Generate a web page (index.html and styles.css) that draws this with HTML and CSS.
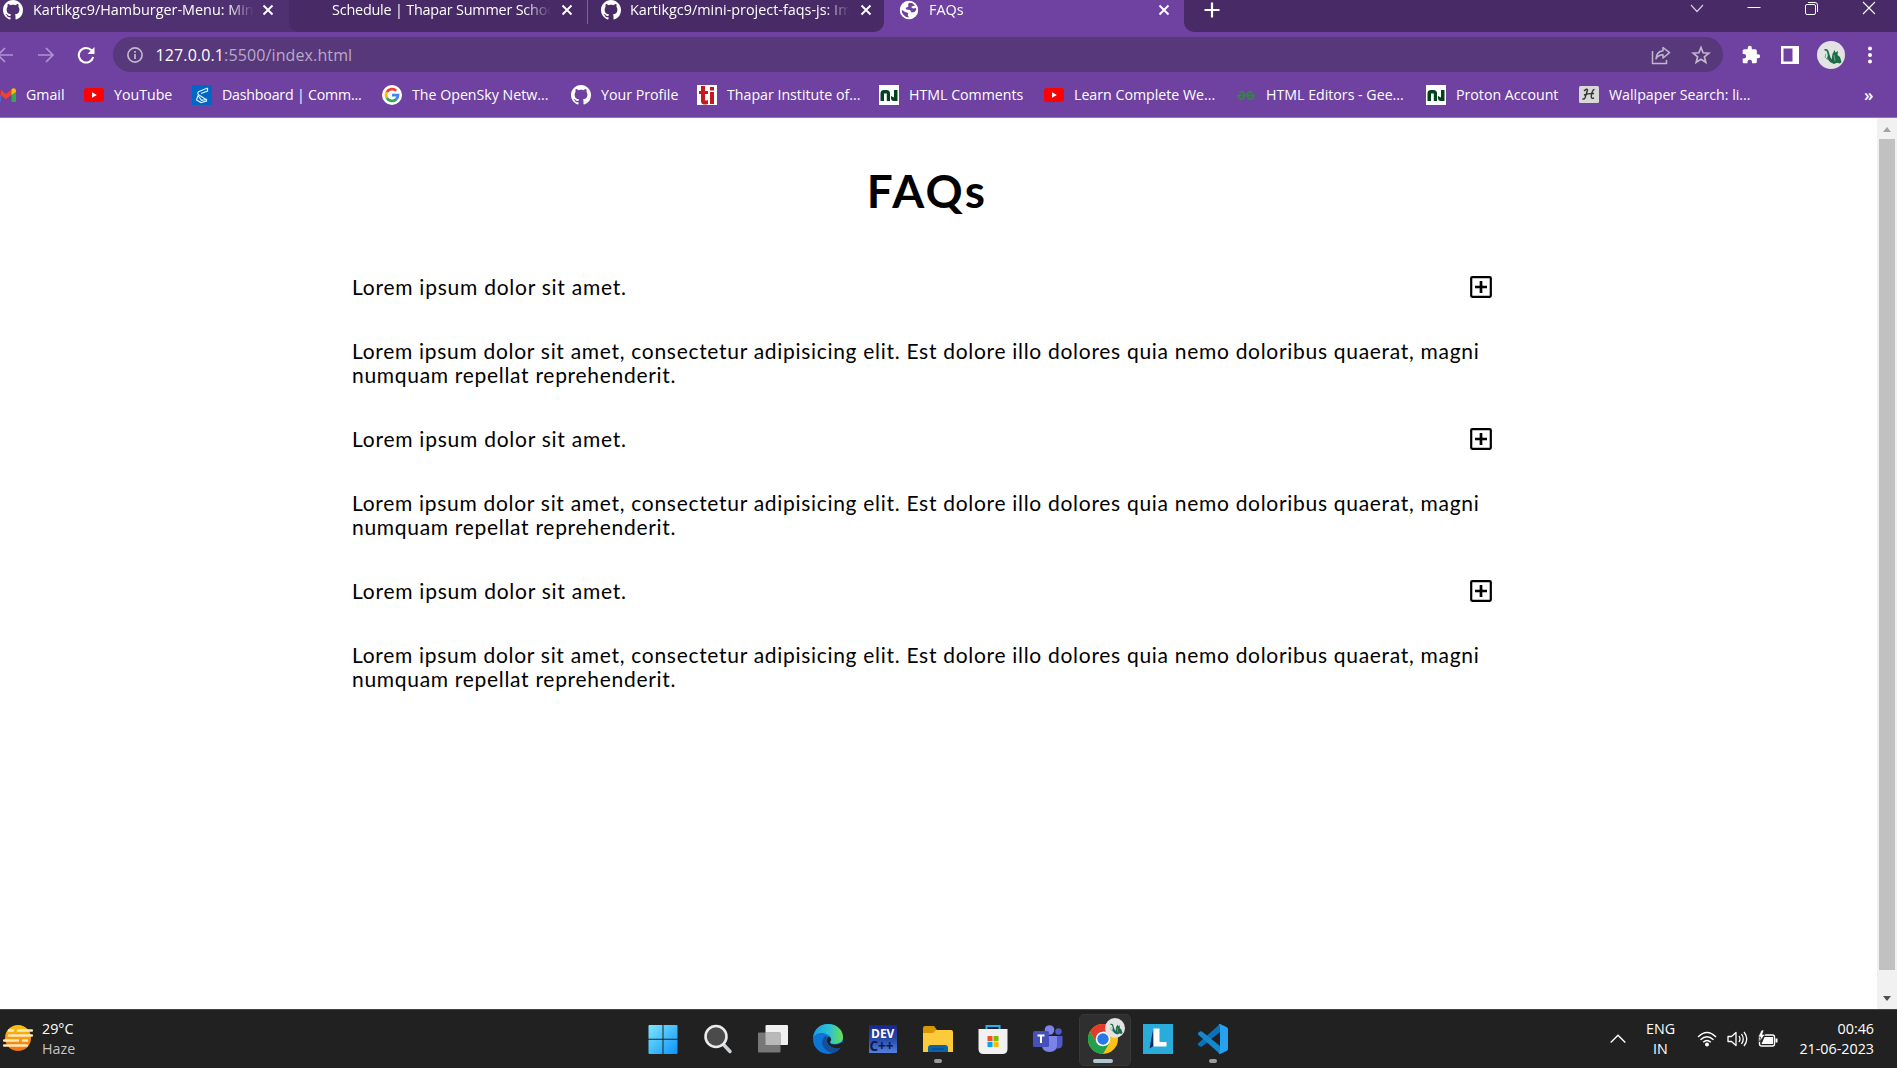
FILE: index.html
```html
<!DOCTYPE html>
<html lang="en">
<head>
<meta charset="utf-8">
<title>FAQs</title>
<link rel="stylesheet" href="styles.css">
</head>
<body>
<svg class="defs" width="0" height="0" aria-hidden="true">
  <defs>
    <symbol id="github" viewBox="0 0 16 16"><path fill="#fff" d="M8 0C3.58 0 0 3.58 0 8c0 3.54 2.29 6.53 5.47 7.59.4.07.55-.17.55-.38 0-.19-.01-.82-.01-1.49-2.01.37-2.53-.49-2.69-.94-.09-.23-.48-.94-.82-1.13-.28-.15-.68-.52-.01-.53.63-.01 1.08.58 1.23.82.72 1.21 1.87.87 2.33.66.07-.52.28-.87.51-1.07-1.78-.2-3.64-.89-3.64-3.95 0-.87.31-1.59.82-2.15-.08-.2-.36-1.02.08-2.12 0 0 .67-.21 2.2.82.64-.18 1.32-.27 2-.27s1.36.09 2 .27c1.53-1.04 2.2-.82 2.2-.82.44 1.1.16 1.92.08 2.12.51.56.82 1.27.82 2.15 0 3.07-1.87 3.75-3.65 3.95.29.25.54.73.54 1.48 0 1.07-.01 1.93-.01 2.2 0 .21.15.46.55.38A8.01 8.01 0 0 0 16 8c0-4.42-3.58-8-8-8z"/></symbol>
    <symbol id="close" viewBox="0 0 12 12"><path d="M1.5 1.5l9 9M10.5 1.5l-9 9" stroke="#fff" stroke-width="1.9"/></symbol>
    <symbol id="youtube" viewBox="0 0 20 20"><rect y="3" width="20" height="14" rx="3" fill="#f00"/><path d="M8 7.2v5.6l4.8-2.8z" fill="#fff"/></symbol>
    <symbol id="nu" viewBox="0 0 20 20"><path fill="#fff" d="M0 0h20v20H0z"/><path fill="#04421f" d="M1.500 8.500q0-3.500 3.500-3.500h2.500q3.500 0 3.500 3.500V16H7.800V8.500H5V16H1.500zM15 5h3.500v11H15q-3 0-3-3v-2l3 1.500z"/></symbol>
    <symbol id="dragon" viewBox="0 0 28 28"><circle cx="14" cy="14" r="14" fill="#e3e3e3"/><path fill="#1d6b48" d="M11 14l2 2 1.500 3 1-6 2-4 1 2.500 2.500-1.500-.5 4 2.500 2 1.500 5-1.500 1.500-3-.8-3 1.300-4-2-3-4z"/><path d="M7.500 9q3-1 3.500 2.500L13 18l3 3" stroke="#1d6b48" stroke-width="1.800" fill="none"/><path d="M9 13l-1 3 3 3M17 14l1 6" stroke="#74a890" fill="none"/></symbol>
    <symbol id="plus-box" viewBox="0 0 22 22"><rect x="1.200" y="1.200" width="19.600" height="19.600" rx="1" fill="none" stroke="#000" stroke-width="2.200"/><path d="M11 5v12M5 11h12" stroke="#000" stroke-width="2.700"/></symbol>
  </defs>
</svg>

<header class="browser">
  <div class="tabstrip">
    <div class="tab tab-light">
      <svg class="fav" width="20" height="20"><use href="#github"/></svg>
      <span class="tab-title">Kartikgc9/Hamburger-Menu: Mini</span>
      <svg width="12" height="12"><use href="#close"/></svg>
    </div>
    <div class="tab tab-second">
      <span class="fav"></span>
      <span class="tab-title">Schedule | Thapar Summer School</span>
      <svg width="12" height="12"><use href="#close"/></svg>
    </div>
    <div class="tab tab-third">
      <svg class="fav" width="20" height="20"><use href="#github"/></svg>
      <span class="tab-title">Kartikgc9/mini-project-faqs-js: Im</span>
      <svg width="12" height="12"><use href="#close"/></svg>
    </div>
    <div class="tab tab-active">
      <svg class="fav" width="20" height="20" viewBox="0 0 20 20"><circle cx="10" cy="10" r="9" fill="#fff"/><path fill="#6f41a1" d="M10.500 2.500l-1.500 2 .5 2-3 1.500 1 1.500 3.500.5 1.500 2.500 3-.5 2-2.500-.5-1.500-3 .5-2-1.500 2-1 2.500-.5-1.500-2.500zM2.200 9.500l4 2.500 3 1-.5 2 1.500 3-4-1-3-3.500z"/><circle cx="10" cy="10" r="8.300" fill="none" stroke="#fff" stroke-width="1.800"/></svg>
      <span class="tab-title">FAQs</span>
      <svg width="12" height="12"><use href="#close"/></svg>
    </div>
    <div class="tab-new">
      <svg width="16" height="16" viewBox="0 0 16 16"><path d="M8 .5v15M.5 8h15" stroke="#fff" stroke-width="2.200"/></svg>
    </div>
    <div class="window-controls">
      <svg width="14" height="14" viewBox="0 0 14 14"><path d="M1 4l6 6.500L13 4" fill="none" stroke="#d5cce0" stroke-width="1.200"/></svg>
      <svg width="14" height="14" viewBox="0 0 14 14"><path d="M.5 6.500h13" stroke="#fff"/></svg>
      <svg width="14" height="14" viewBox="0 0 14 14"><rect x=".5" y="3.500" width="10" height="10" rx="1.500" fill="none" stroke="#fff"/><path d="M3 1.500h7q2.500 0 2.500 2.500v7" fill="none" stroke="#fff"/></svg>
      <svg width="14" height="14" viewBox="0 0 14 14"><path d="M1 1l12 12M13 1L1 13" stroke="#fff" stroke-width="1.100"/></svg>
    </div>
  </div>

  <div class="toolbar">
    <div class="nav">
      <svg width="18" height="18" viewBox="0 0 18 18"><path d="M17 9H2M9 2L2 9l7 7" fill="none" stroke="#b093cf" stroke-width="1.700"/></svg>
      <svg width="18" height="18" viewBox="0 0 18 18"><path d="M1 9h15M9 2l7 7-7 7" fill="none" stroke="#b093cf" stroke-width="1.700"/></svg>
      <svg width="18" height="18" viewBox="0 0 18 18"><path d="M14.500 4.300A7.300 7.300 0 1 0 16.200 11" fill="none" stroke="#fff" stroke-width="2.100"/><path d="M17.500 1v7h-7z" fill="#fff"/></svg>
    </div>
    <div class="omnibox">
      <svg width="16" height="16" viewBox="0 0 16 16"><circle cx="8" cy="8" r="7.100" fill="none" stroke="#c2b6ce" stroke-width="1.700"/><path d="M8 7v5M8 4v1.800" stroke="#c2b6ce" stroke-width="1.800"/></svg>
      <span class="url">127.0.0.1<span class="url-path">:5500/index.html</span></span>
      <svg class="share" width="20" height="20" viewBox="0 0 20 20"><path d="M1.500 6v12.500h14V15" fill="none" stroke="#c2b6ce" stroke-width="1.500"/><path d="M12 2.500l6.500 5.200L12 13v-3.200c-3.500 0-5.500 1.200-7 4 .3-4 2.500-7.500 7-8z" fill="none" stroke="#c2b6ce" stroke-width="1.500" stroke-linejoin="round"/></svg>
      <svg width="20" height="20" viewBox="0 0 20 20"><path d="M10 2.500l2.100 5.300 5.700.4-4.400 3.600 1.400 5.500L10 14.300l-4.800 3 1.400-5.500-4.400-3.600 5.700-.4z" fill="none" stroke="#c2b6ce" stroke-width="1.700"/></svg>
    </div>
    <div class="actions">
      <svg width="20" height="20" viewBox="0 0 24 24"><path fill="#fff" d="M20.500 11H19V7c0-1.100-.9-2-2-2h-4V3.500a2.500 2.500 0 0 0-5 0V5H4c-1.100 0-2 .9-2 2v3.800h1.500a2.700 2.700 0 0 1 0 5.400H2V20c0 1.100.9 2 2 2h3.800v-1.500a2.700 2.700 0 0 1 5.400 0V22H17c1.100 0 2-.9 2-2v-4h1.500a2.500 2.500 0 0 0 0-5z"/></svg>
      <svg width="18" height="18" viewBox="0 0 18 18"><path fill="#fff" fill-rule="evenodd" d="M0 0h18v18H0zM2.500 2.500v13h9v-13z"/></svg>
      <svg width="28" height="28"><use href="#dragon"/></svg>
      <svg width="4" height="18" viewBox="0 0 4 18"><g fill="#fff"><circle cx="2" cy="2.500" r="2"/><circle cx="2" cy="9" r="2"/><circle cx="2" cy="15.500" r="2"/></g></svg>
    </div>
  </div>

  <nav class="bookmarks">
    <a><svg width="20" height="20" viewBox="0 0 20 20"><path fill="#4285f4" d="M0 5v12h4.500V8z"/><path fill="#34a853" d="M20 5v12h-4.500V8z"/><path fill="#ea4335" d="M4.500 4.500L10 9l5.500-4.500V10L10 14.300 4.500 10z"/><path fill="#c5221f" d="M0 5.500Q1 1.500 4.500 4.300V10L0 6.800z"/><path fill="#fbbc04" d="M20 5.500q-1-4-4.500-1.200V10L20 6.800z"/></svg>Gmail</a>
    <a><svg width="20" height="20"><use href="#youtube"/></svg>YouTube</a>
    <a class="tight"><svg width="20" height="20" viewBox="0 0 20 20"><path fill="#0067c5" d="M0 0h20v20H0z"/><path d="M15.500 3L7 6.500Q4.500 8 7 10l7 4.500M15.500 3v3L9 8.500M6 10.500L4.500 15l4.500 2.500 5.500-1.500v-1.500l-5 .8L6 10.500" fill="none" stroke="#d9efff" stroke-width="1.200"/></svg>Dashboard | Comm...</a>
    <a><svg width="20" height="20" viewBox="0 0 20 20"><circle cx="10" cy="10" r="10" fill="#fff"/><g fill="none" stroke-width="2.800"><path stroke="#ea4335" d="M4.800 7.200A6 6 0 0 1 14.200 5.700"/><path stroke="#fbbc04" d="M4.800 12.900a6 6 0 0 1 0-5.800"/><path stroke="#34a853" d="M4.800 12.800a6 6 0 0 0 9.300 1.600"/><path stroke="#4285f4" d="M13.800 14.600A6 6 0 0 0 16 10.100h-6"/></g></svg>The OpenSky Netw...</a>
    <a><svg width="20" height="20"><use href="#github"/></svg>Your Profile</a>
    <a><svg width="20" height="20" viewBox="0 0 20 20"><path fill="#fff" d="M0 0h20v20H0z"/><path fill="#c8171e" d="M4 1h4v5h3v3H8v6q0 1 3 0v4q-7 2-7-3V9H2V6h2zM13 7h4v12h-4zM13 2h4v3.500h-4z"/></svg>Thapar Institute of...</a>
    <a><svg width="20" height="20"><use href="#nu"/></svg>HTML Comments</a>
    <a><svg width="20" height="20"><use href="#youtube"/></svg>Learn Complete We...</a>
    <a><svg width="20" height="20" viewBox="0 0 20 20"><path d="M3 7.500q5-2 5.500 2.500-.5 5-4 4-2-1-2.500-3.500h16q-.5 2.500-2.500 3.500-3.500 1-4-4 .5-4.500 5.500-2.500" fill="none" stroke="#3a7f50" stroke-width="2"/></svg>HTML Editors - Gee...</a>
    <a><svg width="20" height="20"><use href="#nu"/></svg>Proton Account</a>
    <a><svg width="20" height="20" viewBox="0 0 20 20"><rect y="1" width="20" height="17" rx="1.500" fill="#d8d8d8"/><path d="M5 6q3-3 3.500-1L6 13q-1 2-2.500.5M15.500 4.500q-2 0-3 5-1 5 2.500 3.500M5 10q5-2 10-1.500" fill="none" stroke="#333" stroke-width="1.400"/></svg>Wallpaper Search: li...</a>
    <span class="more">»</span>
  </nav>
</header>

<div class="viewport">
  <main class="faqs">
    <h1>FAQs</h1>
    <section class="faq">
      <div class="question"><span>Lorem ipsum dolor sit amet.</span><svg width="22" height="22"><use href="#plus-box"/></svg></div>
      <p class="answer">Lorem ipsum dolor sit amet, consectetur adipisicing elit. Est dolore illo dolores quia nemo doloribus quaerat, magni numquam repellat reprehenderit.</p>
    </section>
    <section class="faq">
      <div class="question"><span>Lorem ipsum dolor sit amet.</span><svg width="22" height="22"><use href="#plus-box"/></svg></div>
      <p class="answer">Lorem ipsum dolor sit amet, consectetur adipisicing elit. Est dolore illo dolores quia nemo doloribus quaerat, magni numquam repellat reprehenderit.</p>
    </section>
    <section class="faq">
      <div class="question"><span>Lorem ipsum dolor sit amet.</span><svg width="22" height="22"><use href="#plus-box"/></svg></div>
      <p class="answer">Lorem ipsum dolor sit amet, consectetur adipisicing elit. Est dolore illo dolores quia nemo doloribus quaerat, magni numquam repellat reprehenderit.</p>
    </section>
  </main>
  <div class="scrollbar">
    <svg width="20" height="21" viewBox="0 0 20 21"><path d="M6 14l4-5 4 5z" fill="#a3a3a3"/></svg>
    <div class="thumb"></div>
    <svg width="20" height="21" viewBox="0 0 20 21"><path d="M6 8l4 5 4-5z" fill="#505050"/></svg>
  </div>
</div>

<footer class="taskbar">
  <div class="weather">
    <svg width="30" height="28" viewBox="0 0 30 28"><defs><linearGradient id="sun" x2="0" y2="1"><stop stop-color="#fcc60e"/><stop offset="1" stop-color="#f07015"/></linearGradient></defs><circle cx="15" cy="14" r="13" fill="url(#sun)"/><g stroke="#ffe9b8" stroke-width="2.500" stroke-linecap="round"><path d="M6 6.500h4M15 6.500h14M6 11.500h23M1 16.500h14M20 16.500h4M1 21.500h23"/></g></svg>
    <div class="two-line"><span>29°C</span><span class="dim">Haze</span></div>
  </div>
  <div class="apps">
    <div class="app"><svg width="30" height="30" viewBox="0 0 30 30"><defs><linearGradient id="win" x2="1" y2="1"><stop stop-color="#7fe7fb"/><stop offset="1" stop-color="#0a93fb"/></linearGradient></defs><path fill="url(#win)" d="M.5 2q0-1 1-1h13v13.800H.5zM15.500 1h13q1 0 1 1v12.800h-14zM.5 15.800h14V30h-13q-1 0-1-1zM15.500 15.800h14V29q0 1-1 1h-13z"/></svg></div>
    <div class="app"><svg width="30" height="30" viewBox="0 0 30 30"><path d="M20 20l7 7.500" stroke="#ccd2d8" stroke-width="3.500" stroke-linecap="round"/><circle cx="13" cy="12.500" r="10.500" fill="#4b4b4b" stroke="#e9ebed" stroke-width="2.600"/></svg></div>
    <div class="app"><svg width="30" height="30" viewBox="0 0 30 30"><rect x="7.500" y="1" width="22.500" height="20" rx="1" fill="#f0f0f0"/><rect y="8.500" width="22.500" height="20" rx="1" fill="#777"/><path fill="#b9b9b9" d="M7.500 8.500h15V21h-15z"/></svg></div>
    <div class="app"><svg width="30" height="30" viewBox="0 0 30 30"><defs><linearGradient id="edge" x2="1"><stop stop-color="#1a9de6"/><stop offset=".55" stop-color="#2ac3d2"/><stop offset="1" stop-color="#6ee04d"/></linearGradient></defs><circle cx="15" cy="15" r="15" fill="#0c76d5"/><path fill="url(#edge)" d="M0 14C1 5 7 0 15 0c9 0 15 6 15 13 0 5-4 7-9 7-3 0-4-1-4-2 2-1 2-5-2-7C8 7 2 10 0 14z"/><path fill="#144f9e" d="M12 12c-7 7 0 16 8 17 4-1 7-4 8-6-7 3-14-1-14-6 0-2 1-3 1-4z"/><path fill="#202020" d="M15.500 12.500q4 2 1.500 5.500 0 2.500 5 2.500 4 0 7-2.500l1 2-1.500 3.500C20 26 14 21 14 17q0-3 1.500-4.500z"/></svg></div>
    <div class="app"><svg width="30" height="30" viewBox="0 0 30 30"><defs><linearGradient id="dev" x2="0" y2="1"><stop stop-color="#17268c"/><stop offset=".5" stop-color="#2849a9"/><stop offset="1" stop-color="#5680dc"/></linearGradient></defs><path fill="url(#dev)" d="M1 1h28v28H1z"/><text class="dev-top" x="3" y="13.500">DEV</text><text class="dev-bottom" x="1.500" y="27">C++</text></svg></div>
    <div class="app"><svg width="30" height="30" viewBox="0 0 30 30"><path fill="#d99600" d="M0 4q0-2 2-2h9l3 4h14v8H0z"/><path fill="#fdca3c" d="M0 9h10l3-3h15q2 0 2 2v20H0z"/><path fill="#0a64ad" d="M5 28v-4q0-3 3-3h14q3 0 3 3v4z"/><path d="M9 25h12" stroke="#0a3f7a"/></svg><i class="pill"></i></div>
    <div class="app"><svg width="30" height="30" viewBox="0 0 30 30"><path d="M8.500 7V2h13v5" fill="none" stroke="#25aff0" stroke-width="2"/><path fill="#f1f1f1" d="M.5 5h29v20q0 5-5 5h-19q-5 0-5-5z"/><path fill="#f25022" d="M9.500 12h5v5.200h-5z"/><path fill="#7fba00" d="M15.500 12h5v5.200h-5z"/><path fill="#00a4ef" d="M9.500 18h5v5h-5z"/><path fill="#ffb900" d="M15.500 18h5v5h-5z"/></svg></div>
    <div class="app"><svg width="30" height="30" viewBox="0 0 30 30"><circle cx="25.500" cy="7.500" r="3.200" fill="#5059c9"/><path fill="#5059c9" d="M20 12h9.500v8q0 4.500-5 4.500H20z"/><circle cx="16.500" cy="6" r="4.800" fill="#7b83eb"/><path fill="#7b83eb" d="M9 12h15v9q0 7-7.500 7T9 21z"/><rect x="0" y="7" width="16" height="16" rx="1.500" fill="#474fb8"/><path d="M4.500 11.500h7M8 11.500V19" stroke="#fff" stroke-width="2"/></svg></div>
    <div class="app app-current"><svg width="30" height="30" viewBox="0 0 30 30"><circle cx="15" cy="15" r="15" fill="#fbc116"/><path fill="#e33b2e" d="M2 7.500A15 15 0 0 1 28 7.500H15L8.500 18.700z"/><path fill="#22a04b" d="M2 7.500A15 15 0 0 0 15 30l6.500-11.300H8.500z"/><circle cx="15" cy="15" r="7.300" fill="#fff"/><circle cx="15" cy="15" r="5.700" fill="#2878e6"/></svg><svg class="profile" width="20" height="20"><use href="#dragon"/></svg><i class="pill pill-wide"></i></div>
    <div class="app"><svg width="30" height="30" viewBox="0 0 30 30"><path fill="#29acd9" d="M0 0h30v30H0z"/><path fill="#09285b" d="M10 6L6.500 24.500l4-2.500z"/><path fill="#fff" d="M10.500 4.500h6v13.500h7v4.500h-13z"/></svg></div>
    <div class="app"><svg width="30" height="30" viewBox="0 0 30 30"><path fill="#0872ba" d="M22 0L0 19.500q-.5 1 0 1.500l2 1.500q1 .3 2 0L22 8z"/><path fill="#1587cf" d="M22 30L0 10.500q-.5-1 0-1.500l2-1.500q1-.3 2 0L22 22z"/><path fill="#27a2f1" d="M22 0l6.500 3q1.500 1 1.500 2v20q0 1-1.500 2L22 30q-1 0-1.500-1 1.500 0 1.500-2V3q0-2-1.500-2 .5-1 1.500-1z"/></svg><i class="pill"></i></div>
  </div>
  <div class="tray">
    <svg width="16" height="10" viewBox="0 0 16 10"><path d="M.7 8.500L8 1.200l7.300 7.300" fill="none" stroke="#fff" stroke-width="1.400"/></svg>
    <div class="two-line lang"><span>ENG</span><span>IN</span></div>
    <svg width="20" height="16" viewBox="0 0 20 16"><circle cx="10" cy="13.500" r="2" fill="#fff"/><path d="M1 6q9-9 18 0M3.500 8.800q6.500-6 13 0M6.200 11.200q3.800-3.500 7.600 0" fill="none" stroke="#fff" stroke-width="1.500"/></svg>
    <svg class="speaker" width="21" height="18" viewBox="0 0 21 18"><path d="M1 6.500h3.500L9 2.500v13l-4.500-4H1z" fill="none" stroke="#fff" stroke-width="1.300" stroke-linejoin="round"/><path d="M12 6q2 3 0 6M14.500 4q3.500 5 0 10M17 2q5.500 7 0 14" fill="none" stroke="#fff" stroke-width="1.300"/></svg>
    <svg class="battery" width="20" height="18" viewBox="0 0 20 18"><rect x="1.500" y="5" width="15" height="11" rx="2" fill="none" stroke="#fff" stroke-width="1.400"/><path fill="#fff" d="M3.500 14l3-7h8.500v7zM17.500 8.500h2v4h-2z"/><path fill="#fff" stroke="#202020" stroke-width=".7" d="M3.500 0L0 7h2.500l-1 5L7 4.500H4.500L6 0z"/></svg>
    <div class="two-line clock"><span>00:46</span><span>21-06-2023</span></div>
  </div>
</footer>
</body>
</html>
```
FILE: styles.css
```css
* { box-sizing: border-box; }

body {
  margin: 0;
  width: 1897px;
  height: 1068px;
  overflow: hidden;
  display: flex;
  flex-direction: column;
  background: #fff;
  font-family: "Open Sans", "Noto Sans", sans-serif;
}

svg { flex: none; display: block; }
.defs { position: absolute; }

/* Browser chrome */
.browser {
  height: 118px;
  background: #6f41a1;
  border-bottom: 1px solid #9672bc;
  color: #fff;
}

.tabstrip {
  height: 32px;
  display: flex;
  background: #472a66;
  font-size: 14.4px;
}

.tab {
  height: 32px;
  padding-bottom: 12px;
  display: flex;
  align-items: center;
  background: #472a66;
}
.tab .fav { width: 20px; margin-right: 10px; flex: none; }
.tab-title {
  flex: 1;
  overflow: hidden;
  white-space: nowrap;
  line-height: 20px;
  margin-right: 10px;
  -webkit-mask-image: linear-gradient(to right, #000 calc(100% - 26px), transparent);
  mask-image: linear-gradient(to right, #000 calc(100% - 26px), transparent);
}
.tab-light { width: 289px; padding-left: 3px; padding-right: 15px; background: #4f3071; }
.tab-light .tab-title { margin-right: 8px; }
.tab-second {
  width: 298px;
  padding-left: 13px;
  padding-right: 14px;
  border-bottom-left-radius: 10px;
  box-shadow: -10px 10px 0 #4f3071;
  clip-path: inset(0 0 0 -10px);
}
.tab-second .fav { width: 0; margin-right: 30px; }
.tab-second .tab-title { letter-spacing: -.2px; }
.tab-third {
  width: 297px;
  padding-left: 14px;
  padding-right: 12px;
  border-bottom-right-radius: 10px;
  background:
    linear-gradient(#7c6794, #7c6794) 0 0 / 1px 24px no-repeat,
    #472a66;
}
.tab-third .tab-title { margin-left: -1px; }
.tab-third + .tab-active { box-shadow: -10px 0 0 #6f41a1, 10px 0 0 #6f41a1; }
.tab-active { width: 300px; padding-left: 15px; padding-right: 14px; background: #6f41a1; }
.tab-third, .tab-new { position: relative; z-index: 1; }
.tab-new {
  width: 56px;
  padding-left: 20px;
  padding-top: 2px;
  border-bottom-left-radius: 10px;
  background: #472a66;
}
.window-controls {
  margin-left: auto;
  padding: 1px 21px 0 0;
  display: flex;
  gap: 43.500px;
}

.toolbar {
  height: 45px;
  display: flex;
  align-items: center;
}
.nav {
  width: 113px;
  display: flex;
  gap: 22.500px;
  margin-left: -4px;
  margin-right: 4px;
}
.omnibox {
  width: 1610px;
  height: 35px;
  border-radius: 18px;
  background: #57387a;
  display: flex;
  align-items: center;
  padding: 0 12px 0 14px;
}
.url { font-size: 16px; margin-left: 12.500px; letter-spacing: .12px; }
.url-path { color: #b9a9c9; }
.share { margin-left: auto; margin-right: 20px; }
.actions {
  display: flex;
  align-items: center;
  padding-left: 18px;
}
.actions svg:nth-child(2) { margin-left: 20px; }
.actions svg:nth-child(3) { margin-left: 18px; }
.actions svg:nth-child(4) { margin-left: 23px; }

.bookmarks {
  height: 35px;
  margin-left: -4px;
  display: grid;
  grid-template-columns: 88px 108px 190px 189px 126px 182px 165px 192px 190px 153px 1fr 33px;
  align-items: center;
  font-size: 14.2px;
}
.bookmarks a {
  display: flex;
  align-items: center;
  gap: 10px;
  line-height: 20px;
  white-space: nowrap;
}
.bookmarks .tight { letter-spacing: -.2px; }
.more { font-size: 17px; font-weight: 600; line-height: 20px; }

/* Page */
.viewport {
  flex: 1;
  display: flex;
  min-height: 0;
}
.faqs {
  flex: 1;
  padding: 45px 375px 0 352px;
  font-family: Lato, sans-serif;
  font-size: 21px;
  line-height: 24px;
  letter-spacing: .7px;
  color: #000;
}
.faqs h1 {
  margin: 0 0 56px;
  text-align: center;
  font-size: 46px;
  line-height: 56px;
  letter-spacing: 2.300px;
}
.faq { margin-bottom: 40px; }
.question {
  display: flex;
  justify-content: space-between;
  align-items: center;
  padding-right: 10px;
  margin-bottom: 40px;
}
.question span { letter-spacing: .75px; }
.answer { margin: 0; }

.scrollbar {
  width: 20px;
  background: #f1f1f1;
  display: flex;
  flex-direction: column;
}
.thumb {
  width: 16px;
  height: 831px;
  margin: 0 auto 18px;
  background: #c1c1c1;
}

/* Taskbar */
.taskbar {
  height: 59px;
  background: #212121;
  border-top: 1px solid #454545;
  color: #fff;
  font-size: 14.3px;
  display: grid;
  grid-template-columns: 635.500px 1fr 290px;
}
.two-line {
  display: flex;
  flex-direction: column;
  line-height: 20px;
}
.dim { color: #c4c4c4; }
.weather {
  display: flex;
  gap: 9px;
  align-items: center;
  padding-left: 3px;
}
.weather svg { margin-bottom: 2px; }
.apps { display: flex; }
.app {
  width: 55px;
  position: relative;
  padding: 14px 12.500px 0;
}
.app-current::before {
  content: "";
  position: absolute;
  left: 3px;
  top: 4px;
  width: 50px;
  height: 50px;
  border-radius: 5px;
  background: #2f2f2f;
  border: 1px solid #383838;
}
.app-current svg { position: relative; }
.app-current .profile {
  position: absolute;
  left: 29.500px;
  top: 8px;
}
.pill {
  position: absolute;
  left: 23.500px;
  top: 49px;
  width: 8px;
  height: 4px;
  border-radius: 2px;
  background: #9b9b9b;
}
.pill-wide { left: 17.500px; width: 20px; background: #afc7cf; }
.dev-top { font: bold 12px "Open Sans", sans-serif; fill: #fff; }
.dev-bottom { font: bold 13.500px "Open Sans", sans-serif; fill: #0a1c50; }

.tray {
  display: flex;
  align-items: center;
  padding-left: 3px;
  padding-right: 23px;
}
.lang { text-align: center; align-items: center; margin: 0 22px 0 20px; width: 29px; }
.speaker { margin-left: 10px; }
.battery { margin-left: 10px; }
.clock { margin-left: auto; text-align: right; }
```
